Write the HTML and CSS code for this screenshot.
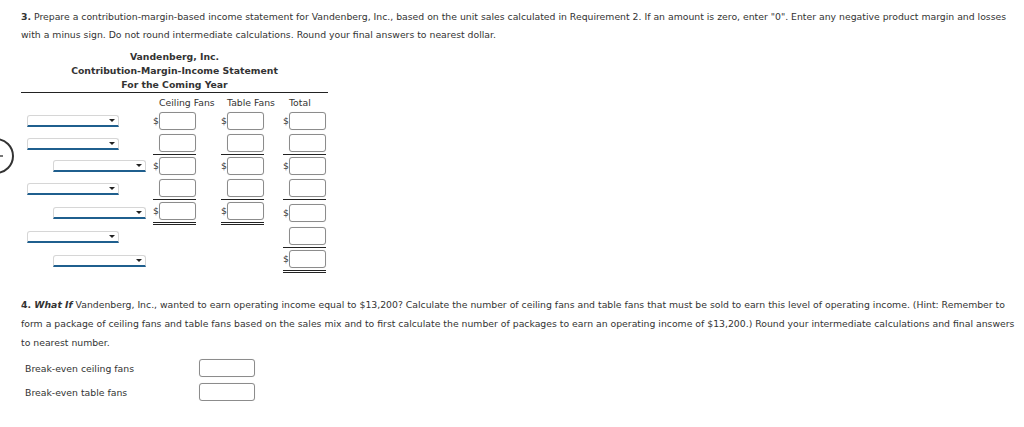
FILE: index.html
```html
<!DOCTYPE html>
<html>
<head>
<meta charset="utf-8">
<link rel="stylesheet" href="styles.css">
</head>
<body>
<div class="nav-circle"><span class="nav-dot"></span></div>
<div class="page">
  <p class="q"><b>3.</b> Prepare a contribution-margin-based income statement for Vandenberg, Inc., based on the unit sales calculated in Requirement 2. If an amount is zero, enter "0". Enter any negative product margin and losses with a minus sign. Do not round intermediate calculations. Round your final answers to nearest dollar.</p>

  <div class="stmt">
    <div class="stmt-head">
      <div>Vandenberg, Inc.</div>
      <div>Contribution-Margin-Income Statement</div>
      <div>For the Coming Year</div>
    </div>
    <table class="grid">
      <tr class="colhead">
        <td class="lab"></td>
        <td class="c1"><span class="ch">Ceiling Fans</span></td>
        <td class="c2"><span class="ch">Table Fans</span></td>
        <td class="c3"><span class="ch">Total</span></td>
      </tr>
      <tr>
        <td class="lab"><div class="dd"></div></td>
        <td class="c1"><div class="amt"><span class="cur">$</span><span class="inp"></span></div></td>
        <td class="c2"><div class="amt"><span class="cur">$</span><span class="inp"></span></div></td>
        <td class="c3"><div class="amt"><span class="cur">$</span><span class="inp"></span></div></td>
      </tr>
      <tr>
        <td class="lab"><div class="dd"></div></td>
        <td class="c1"><div class="amt single"><span class="cur"></span><span class="inp"></span></div></td>
        <td class="c2"><div class="amt single"><span class="cur"></span><span class="inp"></span></div></td>
        <td class="c3"><div class="amt single"><span class="cur"></span><span class="inp"></span></div></td>
      </tr>
      <tr>
        <td class="lab"><div class="dd ind"></div></td>
        <td class="c1"><div class="amt"><span class="cur">$</span><span class="inp"></span></div></td>
        <td class="c2"><div class="amt"><span class="cur">$</span><span class="inp"></span></div></td>
        <td class="c3"><div class="amt"><span class="cur">$</span><span class="inp"></span></div></td>
      </tr>
      <tr>
        <td class="lab"><div class="dd"></div></td>
        <td class="c1"><div class="amt single"><span class="cur"></span><span class="inp"></span></div></td>
        <td class="c2"><div class="amt single"><span class="cur"></span><span class="inp"></span></div></td>
        <td class="c3"><div class="amt single"><span class="cur"></span><span class="inp"></span></div></td>
      </tr>
      <tr>
        <td class="lab"><div class="dd ind"></div></td>
        <td class="c1"><div class="amt double"><span class="cur">$</span><span class="inp"></span></div></td>
        <td class="c2"><div class="amt double"><span class="cur">$</span><span class="inp"></span></div></td>
        <td class="c3"><div class="amt"><span class="cur">$</span><span class="inp"></span></div></td>
      </tr>
      <tr>
        <td class="lab"><div class="dd"></div></td>
        <td class="c1"></td>
        <td class="c2"></td>
        <td class="c3"><div class="amt single"><span class="cur"></span><span class="inp"></span></div></td>
      </tr>
      <tr>
        <td class="lab"><div class="dd ind"></div></td>
        <td class="c1"></td>
        <td class="c2"></td>
        <td class="c3"><div class="amt double"><span class="cur">$</span><span class="inp"></span></div></td>
      </tr>
    </table>
  </div>

  <p class="q q4"><b>4. <i>What If</i></b> Vandenberg, Inc., wanted to earn operating income equal to $13,200? Calculate the number of ceiling fans and table fans that must be sold to earn this level of operating income. (Hint: Remember to form a package of ceiling fans and table fans based on the sales mix and to first calculate the number of packages to earn an operating income of $13,200.) Round your intermediate calculations and final answers to nearest number.</p>

  <div class="be">
    <div class="be-row"><span class="be-lab">Break-even ceiling fans</span><span class="inp wide"></span></div>
    <div class="be-row"><span class="be-lab">Break-even table fans</span><span class="inp wide"></span></div>
  </div>
</div>
</body>
</html>
```

FILE: styles.css
```css
body {
  margin: 0;
  font-family: "DejaVu Sans", Verdana, sans-serif;
  font-size: 9.3px;
  color: #333;
  background: #fff;
}
.page {
  padding: 8px 4px 0 21px;
}
.q {
  margin: 0;
  line-height: 18px;
}
.q4 {
  margin-top: 22px;
  line-height: 19px;
}
.stmt {
  width: 307px;
  margin-top: 6px;
}
.stmt-head {
  text-align: center;
  font-weight: bold;
  line-height: 14px;
  border-bottom: 1px solid #222;
}
.grid {
  border-collapse: collapse;
  margin-top: 3px;
}
.grid td {
  padding: 0;
  vertical-align: middle;
}
.colhead td {
  height: 14px;
  line-height: 14px;
  white-space: nowrap;
}
.ch {
  display: inline-block;
  padding-left: 6px;
  width: 0;
  overflow: visible;
}
.lab {
  width: 132px;
}
.c1 { width: 43px; padding-right: 25px !important; }
.c2 { width: 43px; padding-right: 19px !important; }
.c3 { width: 43px; padding-right: 2px !important; }
.amt {
  display: flex;
  align-items: center;
  width: 43px;
  padding: 2px 0;
}
.amt.single { border-bottom: 1px solid #222; }
.amt.double { border-bottom: 3px double #222; }
.cur {
  width: 6px;
  line-height: 12px;
}
.inp {
  display: inline-block;
  box-sizing: border-box;
  width: 37px;
  height: 18px;
  border: 1px solid #8c8c8c;
  border-radius: 3px;
  background: #fff;
  box-shadow: 0 0 1px rgba(0,0,0,0.15);
}
.dd {
  position: relative;
  box-sizing: border-box;
  width: 92px;
  height: 12px;
  margin-left: 6px;
  border: 1px solid #d6d6d6;
  border-bottom: 2px solid #1f5f8e;
  border-radius: 3px 3px 0 0;
  background: #fff;
}
.dd.ind {
  margin-left: 32px;
  width: 93px;
}
.dd::after {
  content: "";
  position: absolute;
  right: 3px;
  top: 3px;
  border-left: 3px solid transparent;
  border-right: 3px solid transparent;
  border-top: 3px solid #222;
}
.be {
  margin-top: 7px;
  display: flex;
  flex-direction: column;
  gap: 6px;
}
.be-row {
  display: flex;
  align-items: center;
  height: 18px;
}
.be-lab {
  width: 174px;
  padding-left: 4px;
}
.inp.wide {
  width: 56px;
}
.nav-circle {
  position: absolute;
  left: -22px;
  top: 138px;
  width: 32px;
  height: 32px;
  border: 2.5px solid #333;
  border-radius: 50%;
}
.nav-dot {
  position: absolute;
  right: 9px;
  top: 15px;
  width: 3px;
  height: 2px;
  background: #777;
}
```
